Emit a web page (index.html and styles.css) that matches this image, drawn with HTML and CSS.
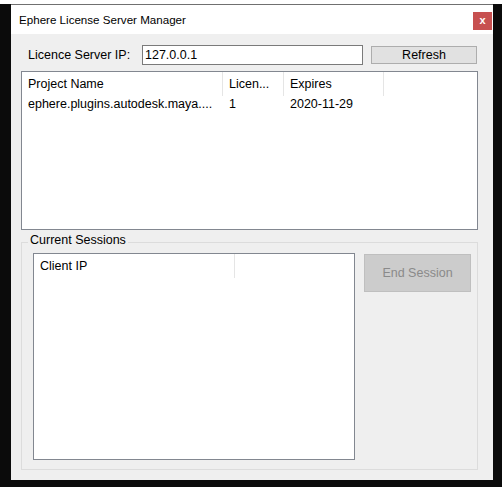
FILE: index.html
```html
<!DOCTYPE html>
<html>
<head>
<meta charset="utf-8">
<link rel="stylesheet" href="styles.css">
</head>
<body>
<div class="window">
  <div class="titlebar">
    <span class="title">Ephere License Server Manager</span>
    <span class="close">x</span>
  </div>
  <div class="content">
    <div class="iprow">
      <span class="label">Licence Server IP:</span>
      <div class="input">127.0.0.1</div>
      <div class="btn refresh">Refresh</div>
    </div>
    <div class="listview projects">
      <div class="lv-header">
        <div class="col c1">Project Name</div>
        <div class="col c2">Licen...</div>
        <div class="col c3">Expires</div>
      </div>
      <div class="lv-row">
        <div class="col c1">ephere.plugins.autodesk.maya....</div>
        <div class="col c2">1</div>
        <div class="col c3">2020-11-29</div>
      </div>
    </div>
    <div class="group">
      <span class="group-label">Current Sessions</span>
      <div class="listview clients">
        <div class="lv-header">
          <div class="col c1">Client IP</div>
        </div>
      </div>
      <div class="btn disabled">End Session</div>
    </div>
  </div>
</div>
</body>
</html>
```

FILE: styles.css
```css
html, body {
  margin: 0;
  padding: 0;
}
body {
  width: 502px;
  height: 487px;
  overflow: hidden;
  background: linear-gradient(#ffffff 0 4px, #0b0b0b 4px);
  font-family: "Liberation Sans", Arial, sans-serif;
  font-size: 12.5px;
  color: #000;
}
.window {
  margin: 4px 0 0 11px;
  width: 482px;
  height: 475px;
  border-top: 1px solid #707070;
  background: #efefef;
  display: flex;
  flex-direction: column;
}
.titlebar {
  position: relative;
  height: 29px;
  background: #ffffff;
  flex: none;
}
.title {
  display: block;
  padding-left: 8px;
  line-height: 29px;
  font-size: 11.6px;
}
.close {
  position: absolute;
  top: 7px;
  right: 1px;
  width: 19px;
  height: 18px;
  background: #c75050;
  color: #fff;
  font-weight: bold;
  font-size: 11px;
  line-height: 17px;
  text-align: center;
}
.content {
  padding: 11px 15px 0 10px;
  display: flex;
  flex-direction: column;
}
.iprow {
  display: flex;
  align-items: center;
  height: 20px;
}
.label {
  width: 114px;
  padding-left: 7px;
  flex: none;
}
.input {
  width: 219px;
  height: 18px;
  border: 1px solid #7a7a7a;
  background: #fff;
  line-height: 18px;
  text-indent: 2px;
  flex: none;
}
.btn {
  box-sizing: border-box;
  text-align: center;
}
.refresh {
  margin-left: 8px;
  width: 106px;
  height: 18px;
  line-height: 16px;
  background: #e1e1e1;
  border: 1px solid #adadad;
}
.listview {
  box-sizing: border-box;
  border: 1px solid #828790;
  background: #fff;
}
.projects {
  margin-top: 6px;
  height: 159px;
  width: 457px;
}
.lv-header, .lv-row {
  display: flex;
}
.lv-header {
  height: 24px;
  line-height: 24px;
}
.lv-header .col {
  border-right: 1px solid #e5e5e5;
}
.lv-row {
  height: 17px;
  line-height: 17px;
}
.col {
  box-sizing: border-box;
  padding-left: 6px;
  white-space: nowrap;
  overflow: hidden;
}
.projects .c1 { width: 201px; }
.projects .c2 { width: 61px; }
.projects .c3 { width: 100px; }
.clients .c1 { width: 201px; }
.group {
  position: relative;
  margin-top: 12px;
  box-sizing: border-box;
  width: 457px;
  height: 228px;
  border: 1px solid #dcdcdc;
  padding: 10px 0 0 11px;
  display: flex;
  align-items: flex-start;
}
.group-label {
  position: absolute;
  top: -10px;
  left: 6px;
  padding: 0 2px;
  background: #efefef;
  line-height: 15px;
}
.clients {
  width: 322px;
  height: 207px;
}
.disabled {
  margin: 1px 0 0 9px;
  width: 107px;
  height: 38px;
  line-height: 36px;
  background: #cccccc;
  border: 1px solid #bfbfbf;
  color: #8a8a8a;
}
```
